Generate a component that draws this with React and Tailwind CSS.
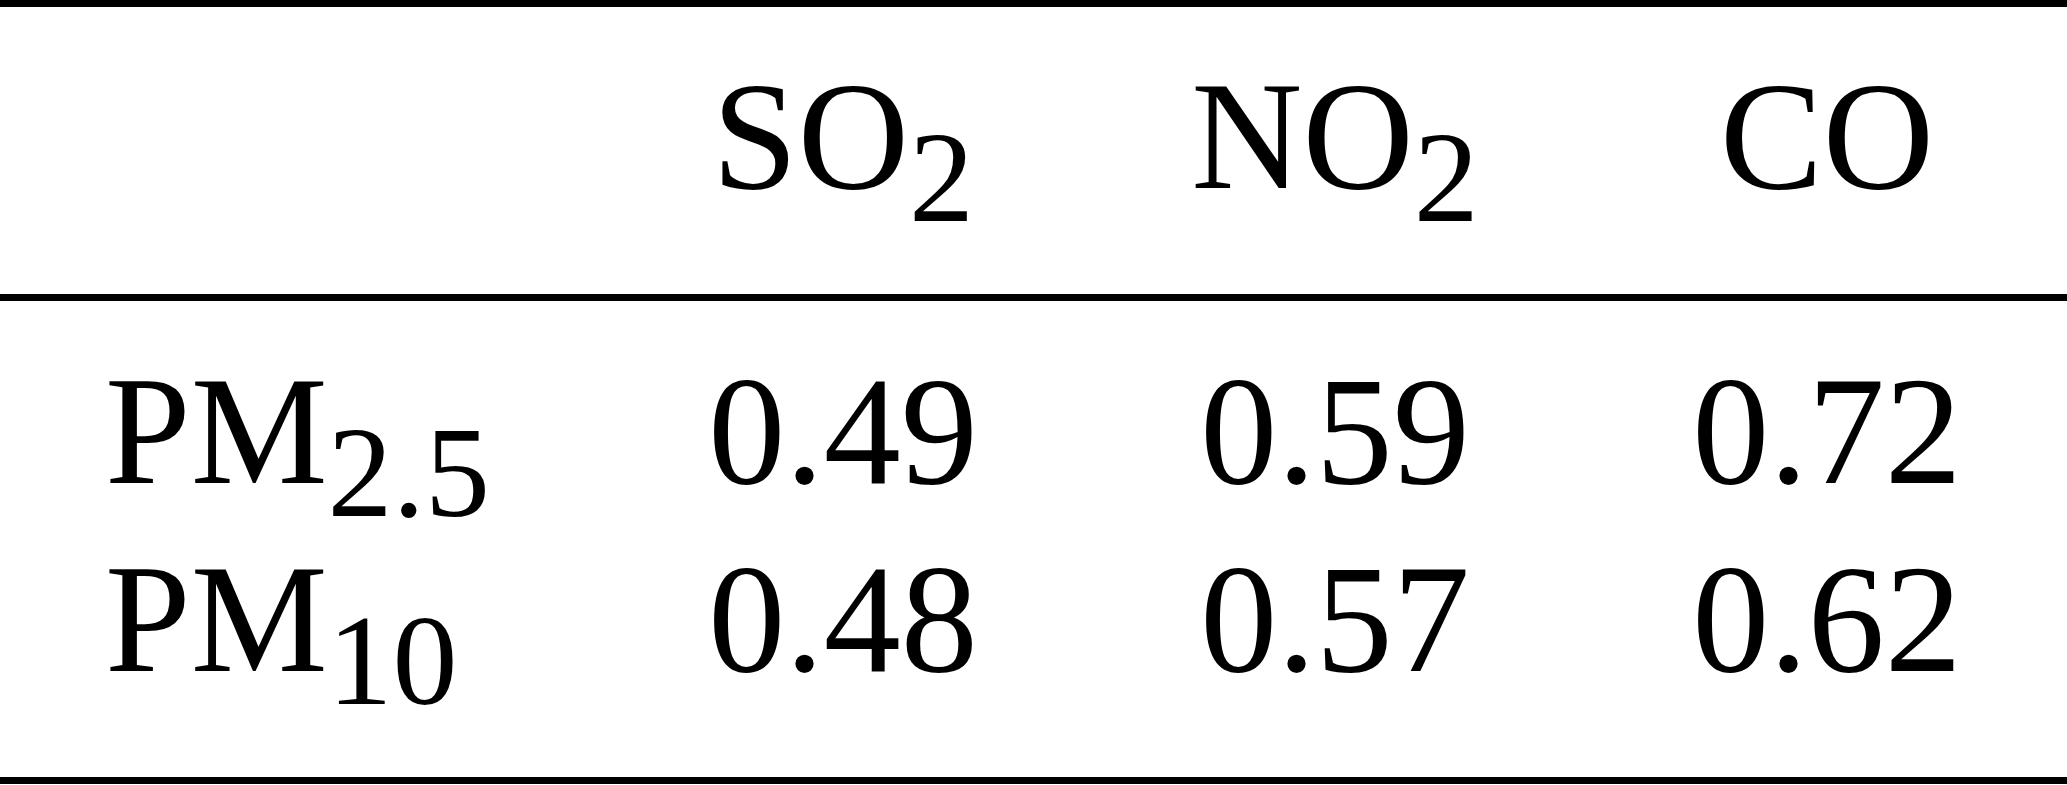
import React from "react";

export default function App() {
  const rows = [
    { name: "PM", sub: "2.5", values: ["0.49", "0.59", "0.72"] },
    { name: "PM", sub: "10", values: ["0.48", "0.57", "0.62"] }
  ];

  return (
    <div className="w-[2067px] h-[785px] overflow-hidden bg-white text-black [font-family:'Liberation_Serif',serif] text-[154px]">
      {/* header row */}
      <div className="h-[294px] border-t-[7px] border-black pt-[52px] grid grid-cols-[597px_492px_492px_492px] leading-[154px]">
        <div />
        <div className="text-center whitespace-nowrap">
          SO<sub className="text-[130px]">2</sub>
        </div>
        <div className="text-center whitespace-nowrap">
          NO<sub className="text-[130px]">2</sub>
        </div>
        <div className="text-center whitespace-nowrap">CO</div>
      </div>

      {/* body */}
      <div className="h-[483px] border-t-[7px] border-black pt-[36px]">
        {rows.map((row, i) => (
          <div key={i} className="grid grid-cols-[597px_492px_492px_492px] h-[188px] leading-[188px]">
            <div className="pl-[105px] whitespace-nowrap">
              {row.name}
              <sub className="text-[130px]">{row.sub}</sub>
            </div>
            {row.values.map((v, j) => (
              <div key={j} className="text-center whitespace-nowrap">{v}</div>
            ))}
          </div>
        ))}
      </div>

      <div className="border-t-[7px] border-black" />
    </div>
  );
}
